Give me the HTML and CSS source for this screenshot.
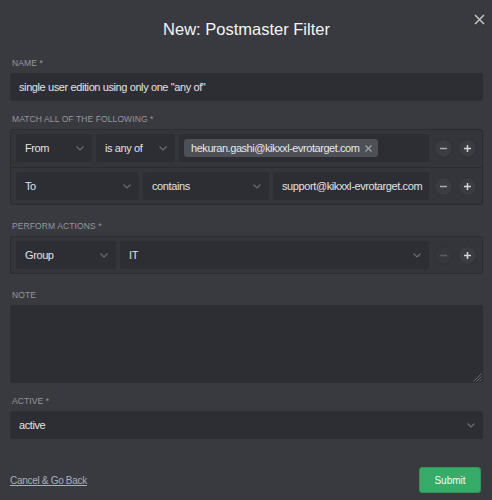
FILE: index.html
```html
<!DOCTYPE html>
<html>
<head>
<meta charset="utf-8">
<link rel="stylesheet" href="styles.css">
</head>
<body>
<div class="modal">
  <header class="modal-header">
    <h1 class="modal-title">New: Postmaster Filter</h1>
    <button class="close" aria-label="Close">
      <svg width="11" height="11" viewBox="0 0 11 11"><path d="M1 1L10 10M10 1L1 10" stroke="#c4c5c9" stroke-width="1.5" fill="none"/></svg>
    </button>
  </header>

  <div class="group first">
    <div class="label">Name *</div>
    <div class="control text-input">single user edition using only one "any of"</div>
  </div>

  <div class="group boxed">
    <div class="label">Match all of the following *</div>
    <div class="box">
      <div class="row top">
        <div class="control select w-from">From<svg class="chev" width="8" height="5" viewBox="0 0 8 5"><path d="M0.5 0.5L4 4L7.5 0.5" stroke="#6c6d73" stroke-width="1.1" fill="none"/></svg></div>
        <div class="control select w-op">is any of<svg class="chev" width="8" height="5" viewBox="0 0 8 5"><path d="M0.5 0.5L4 4L7.5 0.5" stroke="#6c6d73" stroke-width="1.1" fill="none"/></svg></div>
        <div class="control tags grow">
          <span class="tag">hekuran.gashi@kikxxl-evrotarget.com<svg class="tag-x" width="7" height="7" viewBox="0 0 7 7"><path d="M0.5 0.5L6.5 6.5M6.5 0.5L0.5 6.5" stroke="#a4a6ac" stroke-width="1.1" fill="none"/></svg></span>
        </div>
        <div class="btns">
          <span class="circ"><svg width="9" height="9" viewBox="0 0 9 9"><path d="M1 4.5H8" stroke="#a9aab0" stroke-width="1.5"/></svg></span>
          <span class="circ"><svg width="9" height="9" viewBox="0 0 9 9"><path d="M1 4.5H8M4.5 1V8" stroke="#d6d7da" stroke-width="1.5"/></svg></span>
        </div>
      </div>
      <div class="row sep">
        <div class="control select w-to">To<svg class="chev" width="8" height="5" viewBox="0 0 8 5"><path d="M0.5 0.5L4 4L7.5 0.5" stroke="#6c6d73" stroke-width="1.1" fill="none"/></svg></div>
        <div class="control select w-contains">contains<svg class="chev" width="8" height="5" viewBox="0 0 8 5"><path d="M0.5 0.5L4 4L7.5 0.5" stroke="#6c6d73" stroke-width="1.1" fill="none"/></svg></div>
        <div class="control text-input grow">support@kikxxl-evrotarget.com</div>
        <div class="btns">
          <span class="circ"><svg width="9" height="9" viewBox="0 0 9 9"><path d="M1 4.5H8" stroke="#a9aab0" stroke-width="1.5"/></svg></span>
          <span class="circ"><svg width="9" height="9" viewBox="0 0 9 9"><path d="M1 4.5H8M4.5 1V8" stroke="#d6d7da" stroke-width="1.5"/></svg></span>
        </div>
      </div>
    </div>
  </div>

  <div class="group boxed">
    <div class="label">Perform actions *</div>
    <div class="box">
      <div class="row">
        <div class="control select w-group">Group<svg class="chev" width="8" height="5" viewBox="0 0 8 5"><path d="M0.5 0.5L4 4L7.5 0.5" stroke="#6c6d73" stroke-width="1.1" fill="none"/></svg></div>
        <div class="control select grow">IT<svg class="chev" width="8" height="5" viewBox="0 0 8 5"><path d="M0.5 0.5L4 4L7.5 0.5" stroke="#6c6d73" stroke-width="1.1" fill="none"/></svg></div>
        <div class="btns">
          <span class="circ disabled"><svg width="9" height="9" viewBox="0 0 9 9"><path d="M1 4.5H8" stroke="#5c5d63" stroke-width="1.5"/></svg></span>
          <span class="circ"><svg width="9" height="9" viewBox="0 0 9 9"><path d="M1 4.5H8M4.5 1V8" stroke="#d6d7da" stroke-width="1.5"/></svg></span>
        </div>
      </div>
    </div>
  </div>

  <div class="group note">
    <div class="label">Note</div>
    <div class="control textarea">
      <svg class="grip" width="9" height="9" viewBox="0 0 9 9"><path d="M8.5 0.5L0.5 8.5M8.5 3.5L3.5 8.5M8.5 6.5L6.5 8.5" stroke="#6a6b70" stroke-width="1" fill="none"/></svg>
    </div>
  </div>

  <div class="group">
    <div class="label">Active *</div>
    <div class="control select">active<svg class="chev" width="8" height="5" viewBox="0 0 8 5"><path d="M0.5 0.5L4 4L7.5 0.5" stroke="#6c6d73" stroke-width="1.1" fill="none"/></svg></div>
  </div>

  <footer class="footer">
    <a class="cancel" href="#">Cancel &amp; Go Back</a>
    <button class="submit">Submit</button>
  </footer>
</div>
</body>
</html>
```

FILE: styles.css
```css
* { box-sizing: border-box; }
html, body {
  margin: 0;
  padding: 0;
  background: #393a40;
}
body {
  font-family: "Liberation Sans", Arial, sans-serif;
  color: #e1e2e5;
  width: 492px;
  height: 500px;
  overflow: hidden;
}
.modal {
  padding: 0 9px 0 10px;
}
.modal-header {
  position: relative;
  height: 56px;
  padding-top: 17px;
}
.modal-title {
  margin: 0;
  text-align: center;
  font-size: 16.5px;
  line-height: 24px;
  font-weight: 400;
  color: #f4f5f7;
}
.close {
  position: absolute;
  right: -7px;
  top: 8px;
  width: 22px;
  height: 22px;
  padding: 0;
  border: 0;
  background: transparent;
  display: flex;
  align-items: center;
  justify-content: center;
}
.group {
  margin-bottom: 10px;
}
.group.first {
  margin-bottom: 11px;
}
.group.boxed {
  margin-bottom: 14px;
}
.group.note {
  margin-bottom: 11px;
}
.label {
  font-size: 8.5px;
  line-height: 14px;
  text-transform: uppercase;
  letter-spacing: 0.1px;
  color: #96979d;
  margin-bottom: 3px;
  padding-left: 2px;
}
.control {
  background: #2d2e33;
  border-radius: 3px;
  height: 28px;
  font-size: 11px;
  letter-spacing: -0.4px;
  color: #e1e2e5;
  display: flex;
  align-items: center;
  padding: 0 9px;
  white-space: nowrap;
  overflow: hidden;
}
.select {
  justify-content: space-between;
  padding-right: 8px;
}
.chev {
  flex: none;
}
.box {
  background: #34353a;
  border: 1px solid #2b2c30;
  border-radius: 3px;
}
.row {
  display: flex;
  gap: 4px;
  padding: 4px 5px;
  align-items: center;
}
.row.top {
  padding-bottom: 5px;
}
.row.sep {
  border-top: 1px solid #2b2c30;
}
.grow { flex: 1; min-width: 0; }
.w-from { width: 76px; }
.w-op { width: 79px; }
.w-to { width: 123px; }
.w-contains { width: 126px; }
.w-group { width: 100px; }
.tags {
  padding: 0 5px;
}
.tag {
  display: inline-flex;
  align-items: center;
  gap: 6px;
  height: 18px;
  padding: 0 6px 0 7px;
  border-radius: 3px;
  background: #4e5057;
  color: #e6e7ea;
  font-size: 11px;
  letter-spacing: -0.45px;
}
.btns {
  display: flex;
  gap: 5px;
  margin-left: 1px;
}
.circ {
  width: 19px;
  height: 19px;
  border-radius: 50%;
  background: #3b3c42;
  border: 1px solid #303136;
  display: flex;
  align-items: center;
  justify-content: center;
}
.circ.disabled {
  background: #36373c;
}
.textarea {
  height: 78px;
  position: relative;
}
.grip {
  position: absolute;
  right: 1px;
  bottom: 1px;
}
.footer {
  display: flex;
  justify-content: space-between;
  align-items: center;
  margin-top: 28px;
  padding-right: 2px;
}
.cancel {
  color: #a7b0bd;
  font-size: 10px;
  letter-spacing: -0.3px;
  text-decoration: underline;
}
.submit {
  background: #37ac68;
  border: 1px solid #2f9559;
  border-radius: 3px;
  color: #f2fbf5;
  font-family: inherit;
  font-size: 10px;
  width: 62px;
  height: 26px;
  padding: 0;
}
```
